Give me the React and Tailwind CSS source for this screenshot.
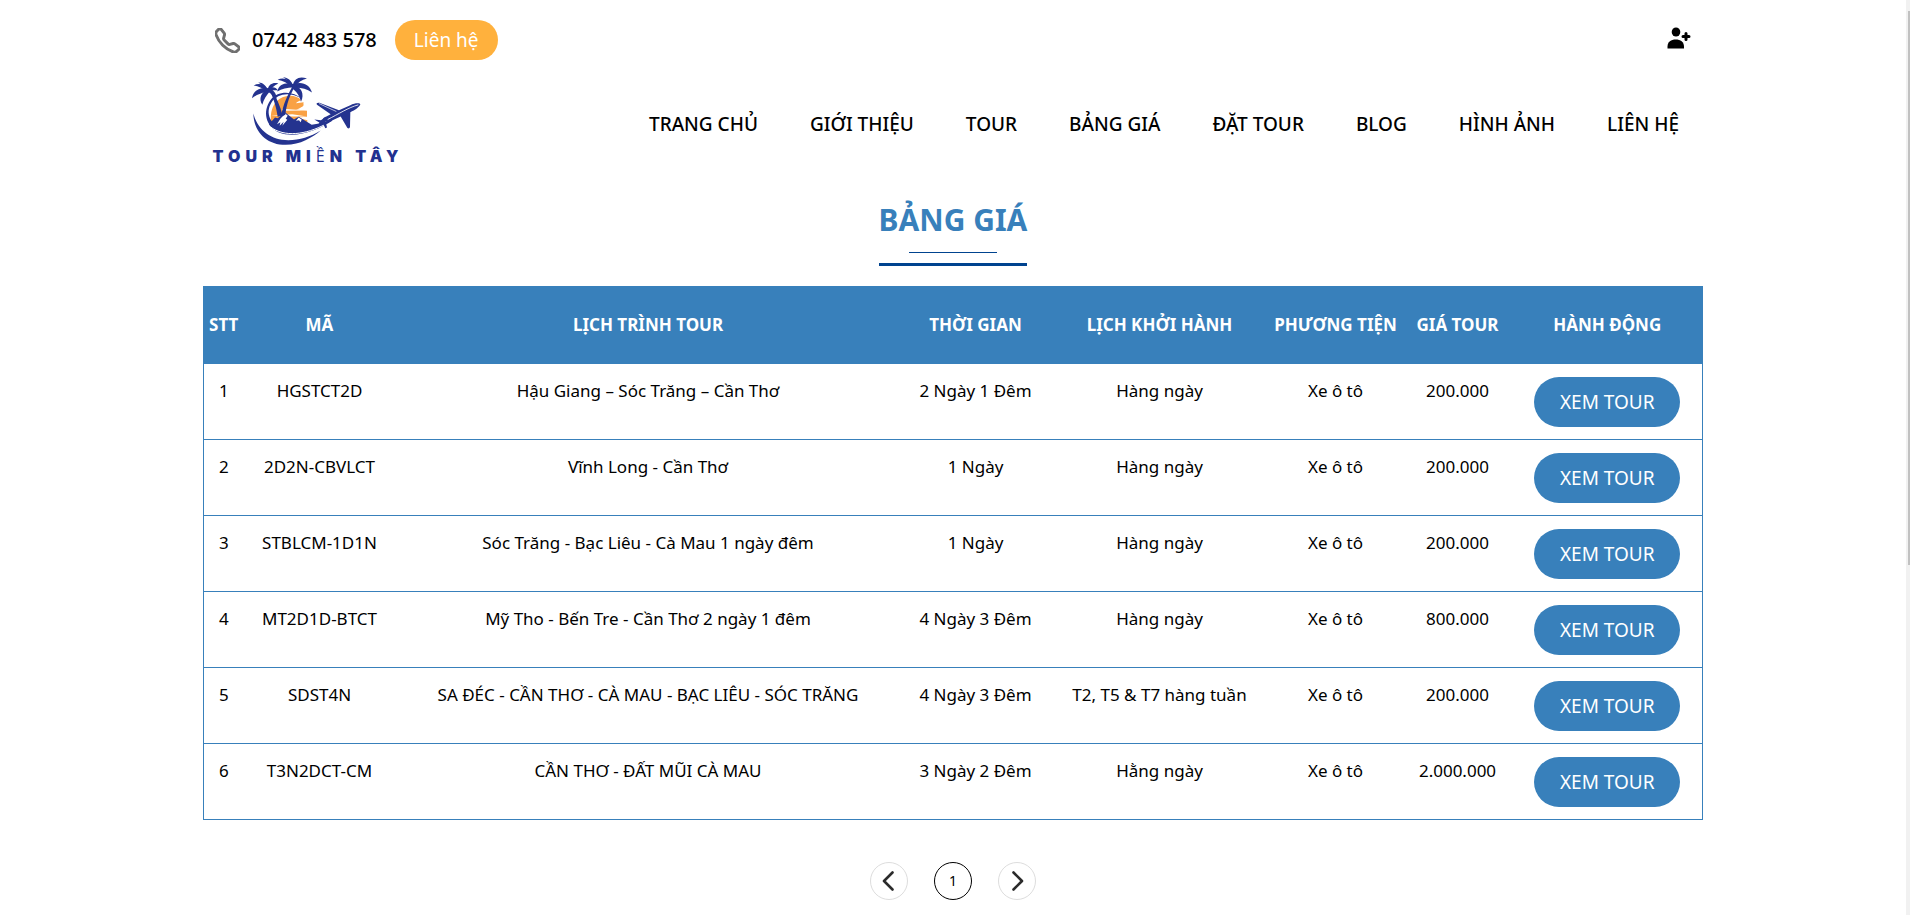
import React from 'react';
import { BsTelephone } from 'react-icons/bs';

const NAV = ['TRANG CHỦ', 'GIỚI THIỆU', 'TOUR', 'BẢNG GIÁ', 'ĐẶT TOUR', 'BLOG', 'HÌNH ẢNH', 'LIÊN HỆ'];

const COLUMNS = [
  { label: 'STT', width: 'w-[40px]' },
  { label: 'MÃ', width: 'w-[152px]' },
  { label: 'LỊCH TRÌNH TOUR', width: '' },
  { label: 'THỜI GIAN', width: 'w-[150px]' },
  { label: 'LỊCH KHỞI HÀNH', width: 'w-[218px]' },
  { label: 'PHƯƠNG TIỆN', width: 'w-[134px]' },
  { label: 'GIÁ TOUR', width: 'w-[110px]' },
  { label: 'HÀNH ĐỘNG', width: 'w-[190px]' },
];

const TOURS = [
  ['HGSTCT2D', 'Hậu Giang – Sóc Trăng – Cần Thơ', '2 Ngày 1 Đêm', 'Hàng ngày', 'Xe ô tô', '200.000'],
  ['2D2N-CBVLCT', 'Vĩnh Long - Cần Thơ', '1 Ngày', 'Hàng ngày', 'Xe ô tô', '200.000'],
  ['STBLCM-1D1N', 'Sóc Trăng - Bạc Liêu - Cà Mau 1 ngày đêm', '1 Ngày', 'Hàng ngày', 'Xe ô tô', '200.000'],
  ['MT2D1D-BTCT', 'Mỹ Tho - Bến Tre - Cần Thơ 2 ngày 1 đêm', '4 Ngày 3 Đêm', 'Hàng ngày', 'Xe ô tô', '800.000'],
  ['SDST4N', 'SA ĐÉC - CẦN THƠ - CÀ MAU - BẠC LIÊU - SÓC TRĂNG', '4 Ngày 3 Đêm', 'T2, T5 & T7 hàng tuần', 'Xe ô tô', '200.000'],
  ['T3N2DCT-CM', 'CẦN THƠ - ĐẤT MŨI CÀ MAU', '3 Ngày 2 Đêm', 'Hằng ngày', 'Xe ô tô', '2.000.000'],
];

function Logo() {
  return (
    <a href="#home" className="flex w-[190px] flex-col items-center text-[#22318f]">
      <svg viewBox="165 225 336 212" className="h-[71px] w-[112px]" fill="#24338f" aria-hidden="true">
        {/* sun with clouds */}
        <path d="M229 368C222 322 246 288 284 287C300 287 311 292 319 300C312 302 306 305 303 309L326 306C324 312 328 313 324 318C316 322 312 326 303 328L330 331L336 332L336 350L306 352L337 360L337 372Z" fill="#f9a144" />
        <path d="M228 346L292 342L336 349L292 349Z" fill="#fff" />
        <path d="M262 326L336 331L262 332Z" fill="#fff" />
        {/* mountains */}
        <path d="M222 372L240 352L248 354L271 337L297 358L311 350L350 374C376 370 392 366 410 358C366 388 320 400 280 398C252 396 232 388 222 372Z" />
        <path d="M271 340L256 356L246 372L256 366L254 377L266 365L262 377L277 359L272 356L278 347Z" fill="#fff" />
        <path d="M311 352L303 362L312 360L317 366L320 358Z" fill="#fff" />
        {/* ring and flight path */}
        <path d="M321 296C292 270 246 272 226 300C202 334 212 378 252 397C300 416 366 392 412 362L408 356C362 384 310 400 268 388C228 376 208 340 230 306C248 280 284 274 321 296Z" />
        <path d="M226 380C268 412 332 404 392 372" fill="none" stroke="#fff" strokeWidth="3" />
        <path d="M175 340C176 394 214 434 272 434C316 434 352 412 377 391C346 410 314 420 280 420C226 420 188 388 175 340Z" />
        {/* trunks */}
        <path d="M222 268C234 290 244 318 248 350L263 346C255 316 243 288 226 266Z" />
        <path d="M294 256C278 284 264 312 258 350L271 344C274 312 285 284 300 258Z" />
        {/* left crown */}
        <path d="M220 268C206 250 190 248 176 256C190 258 202 264 214 273Z" />
        <path d="M220 264C196 260 174 270 171 294C184 284 198 278 220 273Z" />
        <path d="M220 266C198 276 190 296 202 314C206 298 214 286 226 272Z" />
        <path d="M217 269C214 256 202 246 190 247C200 254 208 262 214 272Z" />
        <path d="M218 268C222 252 234 246 250 250C238 256 230 262 225 272Z" />
        <path d="M220 266C232 258 242 261 249 271C238 269 230 271 223 275Z" />
        <path d="M222 266C238 270 248 284 243 303C238 290 230 281 219 275Z" />
        {/* right crown */}
        <path d="M296 256C282 236 264 231 248 239C264 242 278 248 291 262Z" />
        <path d="M296 252C274 244 250 252 247 274C260 266 276 262 296 261Z" />
        <path d="M294 256C288 240 280 232 264 231C276 238 284 246 290 260Z" />
        <path d="M293 256C298 234 314 227 336 235C320 239 308 247 300 261Z" />
        <path d="M296 252C320 242 344 252 351 277C334 266 318 262 297 263Z" />
        <path d="M296 254C318 260 330 282 318 305C314 288 306 274 290 264Z" />
        {/* airliner */}
        <path d="M496 312C494 308 478 309 466 315L432 330L377 309C368 306 362 309 366 314L407 342L384 354C388 360 394 364 400 366L437 349L455 380C458 387 464 386 465 380L466 336C480 329 494 320 496 312Z" />
        <path d="M490 314C460 322 430 342 398 358" fill="none" stroke="#fff" strokeWidth="2.5" />
        <path d="M372 310L424 334" fill="none" stroke="#fff" strokeWidth="2" />
        {/* tail */}
        <path d="M358 358L378 360L392 350L396 354L392 364L396 382L391 384L384 370L370 374L373 367Z" />
      </svg>
      <span className="whitespace-nowrap pl-[4px] font-['Inter'] text-base/5 font-black tracking-[5px]">
        TOUR MI<span className="font-['Open_Sans'] font-normal">Ề</span>N TÂY
      </span>
    </a>
  );
}

function AddUserIcon() {
  return (
    <svg viewBox="0 0 24 24" className="size-6" fill="currentColor" aria-hidden="true">
      <ellipse cx="9" cy="6" rx="4.3" ry="4.6" />
      <path d="M0.500 22.500V20.500C0.500 16 4 13.500 8.750 13.500S17 16 17 20.500V22.500Z" />
      <path d="M19 7.500V13.500M16 10.500H22" fill="none" stroke="currentColor" strokeWidth="3" strokeLinecap="round" />
    </svg>
  );
}

function Chevron({ d }) {
  return (
    <svg viewBox="0 0 20 20" className="size-5" fill="none" stroke="#2b2b2b" strokeWidth="2.6" strokeLinecap="round" strokeLinejoin="round" aria-hidden="true">
      <path d={d} />
    </svg>
  );
}

export default function App() {
  return (
    <div className="flex bg-white font-['Noto_Sans',sans-serif] text-black">
      <div className="min-w-0 flex-1">
        <div className="mx-auto max-w-[1500px]">
          <header className="px-2">
            <div className="flex items-center justify-between px-1 pt-5">
              <div className="flex items-center">
                <BsTelephone className="size-[25px] text-[#6f6f6f]" stroke="currentColor" strokeWidth="0.8" aria-hidden="true" />
                <a href="tel:0742483578" className="ml-3 text-xl font-medium">0742 483 578</a>
                <a href="#contact" className="ml-[18px] flex h-10 items-center rounded-full bg-[#ffb13d] px-[19px] text-[19px] text-white">Liên hệ</a>
              </div>
              <button type="button" aria-label="Đăng ký" className="pb-1">
                <AddUserIcon />
              </button>
            </div>
            <div className="flex items-start justify-between pt-[15px]">
              <Logo />
              <nav aria-label="Menu chính" className="flex gap-[52px] pr-4 pt-[35px] text-[19px]/7 font-medium">
                {NAV.map((item) => (
                  <a key={item} href="#menu" className="whitespace-nowrap">{item}</a>
                ))}
              </nav>
            </div>
          </header>

          <main>
            <div className="flex justify-center pt-[34px]">
              <h1 className="flex flex-col items-center border-b-[3px] border-[#00438f] text-[30px]/10 font-bold text-[#3880bb]">
                BẢNG GIÁ
                <span className="mb-[10px] mt-3 h-px w-[88px] bg-[#00438f]" />
              </h1>
            </div>

            <table className="mt-5 w-full table-fixed border-collapse border border-[#3880bb] text-center text-[17px]/6">
              <thead>
                <tr className="h-[77px] bg-[#3880bb] text-white">
                  {COLUMNS.map((c) => (
                    <th key={c.label} scope="col" className={`${c.width} whitespace-nowrap font-bold`}>{c.label}</th>
                  ))}
                </tr>
              </thead>
              <tbody>
                {TOURS.map((row, i) => (
                  <tr key={row[0]} className="h-[76px] border-b border-[#3880bb] align-top">
                    <td className="pt-[15px]">{i + 1}</td>
                    {row.map((cell, j) => (
                      <td key={j} className="whitespace-nowrap pt-[15px]">{cell}</td>
                    ))}
                    <td className="pt-[13px]">
                      <a href="#tour" className="mx-auto flex h-[50px] w-[146px] items-center justify-center rounded-full bg-[#3880bb] text-[19px] text-white">XEM TOUR</a>
                    </td>
                  </tr>
                ))}
              </tbody>
            </table>

            <nav aria-label="Phân trang" className="flex justify-center gap-[26px] pb-[15px] pt-[42px]">
              <button type="button" aria-label="Trang trước" className="flex size-[38px] items-center justify-center rounded-full border border-[#dddddd]">
                <Chevron d="M13.5 1.5L5 10L13.5 18.5" />
              </button>
              <button type="button" className="flex size-[38px] items-center justify-center rounded-full border border-black text-sm">1</button>
              <button type="button" aria-label="Trang sau" className="flex size-[38px] items-center justify-center rounded-full border border-[#dddddd]">
                <Chevron d="M6.5 1.5L15 10L6.5 18.5" />
              </button>
            </nav>
          </main>
        </div>
      </div>

      <div aria-hidden="true" className="flex w-1 flex-col items-end bg-[#f1f1f1] pt-[11px]">
        <div className="h-[554px] w-0.5 bg-[#c1c1c1]" />
      </div>
    </div>
  );
}
